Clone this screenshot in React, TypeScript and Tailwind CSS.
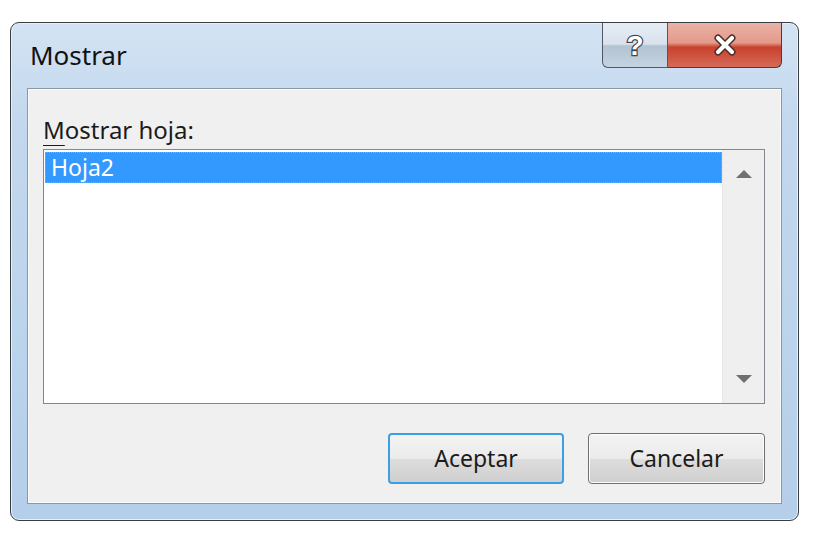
export default function App() {
  return (
    <div className="w-[815px] h-[536px] bg-white pt-[22px] pl-[10px] font-['Noto_Sans',sans-serif]">
      <div className="w-[789px] h-[499px] rounded-[9px] border border-[#3a3d42] bg-[linear-gradient(to_bottom,#d3e3f3_0%,#c3d8ee_20%,#b5cfea_100%)] flex flex-col px-[16px] pb-[16px] shadow-[inset_0_0_0_1px_#e6f0fa]">
        {/* title bar */}
        <div className="h-[65px] flex items-start justify-between">
          <div className="pl-[3px] pt-[15px] text-[26px] leading-[34px] text-[#111]">Mostrar</div>
          <div className="flex">
            <div className="w-[66px] h-[45px] rounded-bl-[6px] border border-t-0 border-[#4f5966] bg-[linear-gradient(to_bottom,#e6edf4_0%,#d9e3ed_48%,#b3c3d3_52%,#c5d3e1_100%)] flex items-center justify-center">
              <svg width="22" height="30" viewBox="0 0 22 30">
                <text x="11" y="25" textAnchor="middle" fontSize="28" fontWeight="bold" fontFamily="Liberation Sans, sans-serif" fill="#ffffff" stroke="#3f4752" strokeWidth="2.4" paintOrder="stroke">?</text>
              </svg>
            </div>
            <div className="w-[114px] h-[45px] rounded-br-[6px] border border-l-0 border-t-0 border-[#4f3a36] bg-[linear-gradient(to_bottom,#eab2a6_0%,#e39a8b_45%,#c8412c_55%,#d66a58_100%)] flex items-center justify-center">
              <svg width="28" height="22" viewBox="0 0 28 22">
                <path d="M7 4 L21 18 M21 4 L7 18" stroke="#4a2a26" strokeWidth="7" strokeLinecap="round" />
                <path d="M7 4 L21 18 M21 4 L7 18" stroke="#fff" strokeWidth="4.2" strokeLinecap="round" />
              </svg>
            </div>
          </div>
        </div>

        {/* client area */}
        <div className="flex-1 bg-[#f0f0f0] border border-[#8b97a4] shadow-[inset_0_0_0_1px_#fbfbfb] flex flex-col pl-[15px] pr-[16px] pt-[25px] pb-[19px] text-[#1b1b1b]">
          <div className="text-[24px] leading-[32px]">
            <span className="underline decoration-1 underline-offset-[6px]">M</span>ostrar hoja:
          </div>
          <div className="mt-[3px] h-[255px] border border-[#828790] bg-white flex">
            <div className="flex-1 pt-[2px] pl-[1px]">
              <div className="h-[31px] bg-[#3399ff] border border-dotted border-[#e39a3b] text-white text-[23px] leading-[29px] pl-[5px]">Hoja2</div>
            </div>
            <div className="w-[42px] bg-[#efefef] border-l border-[#e8e8e8] flex flex-col items-center justify-between py-[20px]">
              <svg width="16" height="8" viewBox="0 0 16 8">
                <path d="M8 0 L16 8 L0 8 Z" fill="#707070" />
              </svg>
              <svg width="16" height="8" viewBox="0 0 16 8">
                <path d="M0 0 L16 0 L8 8 Z" fill="#707070" />
              </svg>
            </div>
          </div>
          <div className="mt-auto flex justify-end gap-[24px]">
            <button className="w-[176px] h-[51px] rounded-[4px] border-2 border-[#3c9fe3] bg-[linear-gradient(to_bottom,#f3f3f3_0%,#ebebeb_50%,#dddddd_51%,#cfcfcf_100%)] text-[23px] text-[#1b1b1b]">Aceptar</button>
            <button className="w-[177px] h-[51px] rounded-[4px] border border-[#707070] shadow-[inset_0_0_0_1px_#fcfcfc] bg-[linear-gradient(to_bottom,#f3f3f3_0%,#ebebeb_50%,#dddddd_51%,#cfcfcf_100%)] text-[23px] text-[#1b1b1b]">Cancelar</button>
          </div>
        </div>
      </div>
    </div>
  );
}
